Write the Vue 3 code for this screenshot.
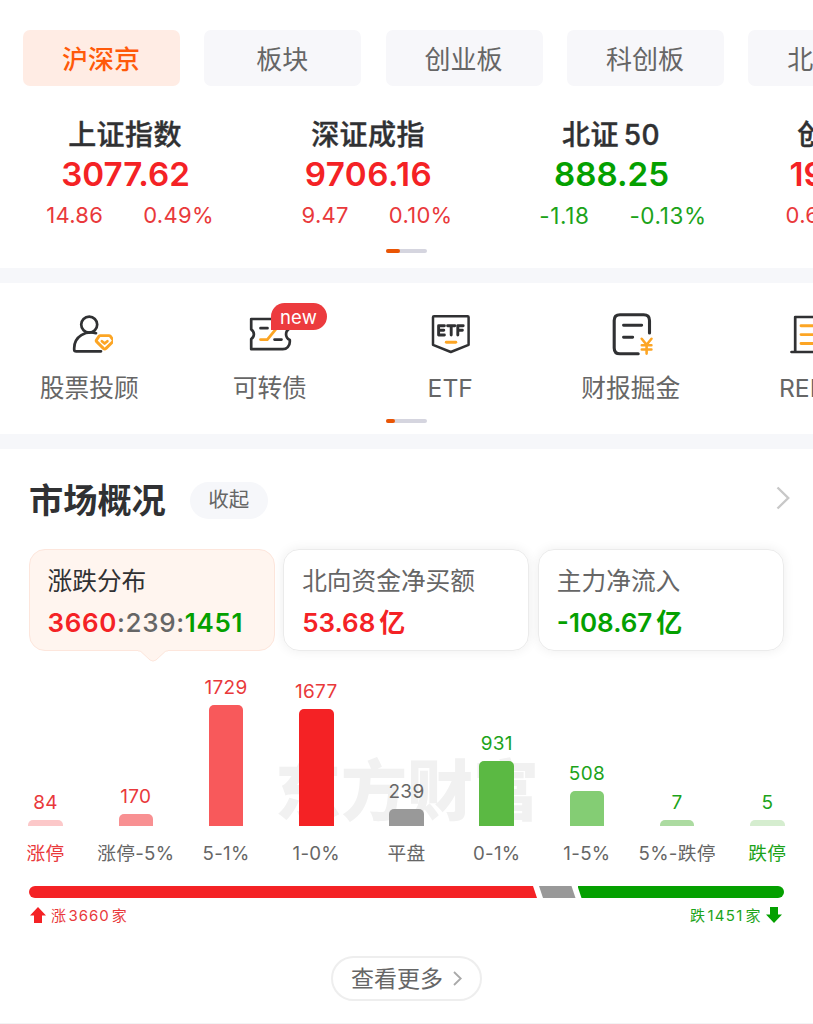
<template>
  <div class="page">
    <section class="quotes">
      <div class="tabs">
        <div v-for="(tab, i) in tabs" :key="tab" class="tab" :class="{ active: i === 0 }">{{ tab }}</div>
      </div>
      <div class="indexes">
        <div v-for="item in indexes" :key="item.name" class="index" :class="item.trend">
          <div class="index-name">{{ item.name }}<span v-if="item.num" class="index-num">{{ item.num }}</span></div>
          <div class="index-price">{{ item.price }}</div>
          <div class="index-change">
            <span>{{ item.change }}</span>
            <span>{{ item.percent }}</span>
          </div>
        </div>
      </div>
      <div class="pager"><i class="wide"></i></div>
    </section>

    <section class="shortcuts">
      <div class="shortcut-row">
        <div class="shortcut">
          <svg class="icon" viewBox="0 0 48 48" fill="none" stroke-linecap="round" stroke-linejoin="round">
            <g stroke="#303133" stroke-width="2.7">
              <circle cx="24.2" cy="14.6" r="8" />
              <path d="M31 23.2C21 20.5 9.2 26 9.2 38.2v1.2q0 1.9 2 1.9H36" />
            </g>
            <g stroke="#fca524">
              <path d="M35.2 25.600h8.800q.8 0 1.300.6l2.900 3.900q.5.800-.2 1.500l-7 6.800q-1.300 1.200-2.600 0l-6.800-6.800q-.7-.7-.2-1.500l2.700-3.900q.4-.6 1.100-.6z" stroke-width="2.9" />
              <path d="M36.900 31.200l2.700 2.300 2.800-2.300" stroke-width="2.700" />
            </g>
          </svg>
          <div class="shortcut-label">股票投顾</div>
        </div>
        <div class="shortcut">
          <svg class="icon" viewBox="0 0 48 48" fill="none" stroke-linecap="round" stroke-linejoin="round">
            <g stroke="#303133" stroke-width="2.7">
              <path d="M5.2 9h38.600v9.500c-5 2.500-5 9 0 11.500v2c0 4-3 7.200-7 7.200H5.200V29c3.600-2.600 3.600-7 0-9.600z" />
              <path d="M14.500 18.200h7M28.500 29.600h7" stroke-width="2.700" />
            </g>
            <path d="M14.500 29.600h6.800l9.400-11.400h6" stroke="#fca524" stroke-width="2.8" />
          </svg>
          <span class="badge">new</span>
          <div class="shortcut-label">可转债</div>
        </div>
        <div class="shortcut">
          <svg class="icon" viewBox="0 0 48 48" fill="none" stroke-linecap="round" stroke-linejoin="round">
            <path d="M8 6.200h33.600q1 0 1 1v27.600L24.800 42 7 34.800V7.200q0-1 1-1z" stroke="#303133" stroke-width="2.5" />
            <path d="M18.400 15.800h-5.800v9.200h5.800M12.600 20.300h5.200M21.600 15.800h7.200M25.200 15.800V25M37.200 15.800h-5.400V25M31.800 20.300h4.600" stroke="#303133" stroke-width="2.900" />
            <path d="M20.300 32.300h9.500" stroke="#fca524" stroke-width="2.900" />
          </svg>
          <div class="shortcut-label">ETF</div>
        </div>
        <div class="shortcut">
          <svg class="icon" viewBox="0 0 48 48" fill="none" stroke-linecap="round" stroke-linejoin="round">
            <g stroke="#303133" stroke-width="3.1">
              <path d="M42.500 23V10.500q0-5.800-5.800-5.800H13q-5.800 0-5.800 5.800V38q0 5.800 5.800 5.800h18.200" />
              <path d="M16.500 15.200h18.200M16.500 27.300h9.200" stroke-width="2.900" />
            </g>
            <path d="M34.700 28.800l4.900 6 4.900-6M34.800 35.300h9.600M34.800 39.500h9.600M39.600 34.800v8.800" stroke="#fca524" stroke-width="2.600" />
          </svg>
          <div class="shortcut-label">财报掘金</div>
        </div>
        <div class="shortcut">
          <svg class="icon" viewBox="0 0 48 48" fill="none" stroke-linecap="round" stroke-linejoin="round">
            <path d="M4.500 42h40M8.200 42V7h24v35" stroke="#303133" stroke-width="2.7" />
            <path d="M14 15.700h12M14 24.600h12M14 33.500h12" stroke="#fca524" stroke-width="2.9" />
          </svg>
          <div class="shortcut-label">REITs</div>
        </div>
      </div>
      <div class="pager"><i></i></div>
    </section>

    <section class="market">
      <div class="market-head">
        <h2>市场概况</h2>
        <span class="fold">收起</span>
        <svg class="head-arrow" viewBox="0 0 14 24" fill="none" stroke="#c8c8c8" stroke-width="2.4">
          <path d="M1.500 1.500L12.200 12 1.500 22.500" />
        </svg>
      </div>

      <div class="cards">
        <div class="card selected">
          <div class="card-title">涨跌分布</div>
          <div class="card-value"><span class="up">3660</span><span class="flat">:239:</span><span class="down">1451</span></div>
          <svg class="pointer" viewBox="0 0 30 12">
            <path d="M0 0h30v1.200c-2 0-3 .8-4 1.800l-8 7q-3 2.400-6 0L4 3C3 2 2 1.200 0 1.200z" fill="#fff5ef" />
            <path d="M0 .8c2 0 3 .8 4 1.800l8 7.400q3 2.200 6 0l8-7.400c1-1 2-1.800 4-1.800" fill="none" stroke="#fde6dc" />
          </svg>
        </div>
        <div class="card">
          <div class="card-title">北向资金净买额</div>
          <div class="card-value up">53.68<span class="unit">亿</span></div>
        </div>
        <div class="card">
          <div class="card-title">主力净流入</div>
          <div class="card-value down">-108.67<span class="unit">亿</span></div>
        </div>
      </div>

      <div class="chart">
        <div class="watermark">东方财富</div>
        <div v-for="bar in bars" :key="bar.label" class="column" :class="bar.trend">
          <span class="count">{{ bar.count }}</span>
          <div class="bar" :style="{ height: bar.height + 'px', background: bar.color }"></div>
          <span class="range" :class="{ limit: bar.limit }">{{ bar.label }}</span>
        </div>
      </div>

      <div class="ratio">
        <div class="ratio-up"></div>
        <div class="ratio-flat"></div>
        <div class="ratio-down"></div>
      </div>
      <div class="totals">
        <div class="total up">
          <svg viewBox="0 0 16 16"><path d="M8 0l8 8.400h-4V16H4V8.400H0z" fill="#f42225" /></svg>
          <span>涨<b>3660</b>家</span>
        </div>
        <div class="total down">
          <span>跌<b>1451</b>家</span>
          <svg viewBox="0 0 16 16"><path d="M8 16l8-8.400h-4V0H4v7.600H0z" fill="#04a000" /></svg>
        </div>
      </div>

      <div class="more">
        <span>查看更多</span>
        <svg viewBox="0 0 9 15" fill="none" stroke="#a9a9a9" stroke-width="1.8">
          <path d="M1 1l6.700 6.500L1 14" />
        </svg>
      </div>
    </section>
  </div>
</template>

<script setup>
const tabs = ['沪深京', '板块', '创业板', '科创板', '北证板'];

const indexes = [
  { name: '上证指数', price: '3077.62', change: '14.86', percent: '0.49%', trend: 'up' },
  { name: '深证成指', price: '9706.16', change: '9.47', percent: '0.10%', trend: 'up' },
  { name: '北证', num: '50', price: '888.25', change: '-1.18', percent: '-0.13%', trend: 'down' },
  { name: '创业板指', price: '1902.63', change: '0.68', percent: '0.04%', trend: 'up' },
];

const bars = [
  { label: '涨停', count: 84, height: 6, color: '#fcc8c9', trend: 'up', limit: true },
  { label: '涨停-5%', count: 170, height: 12, color: '#f89092', trend: 'up' },
  { label: '5-1%', count: 1729, height: 121, color: '#f8595b', trend: 'up' },
  { label: '1-0%', count: 1677, height: 117, color: '#f42225', trend: 'up' },
  { label: '平盘', count: 239, height: 17, color: '#999999', trend: 'flat' },
  { label: '0-1%', count: 931, height: 65, color: '#5bb943', trend: 'down' },
  { label: '1-5%', count: 508, height: 35.5, color: '#84cd74', trend: 'down' },
  { label: '5%-跌停', count: 7, height: 6, color: '#acdba1', trend: 'down' },
  { label: '跌停', count: 5, height: 6, color: '#d5edcf', trend: 'down', limit: true },
];
</script>

<style>
body {
  margin: 0;
  background: #fff;
}
</style>

<style scoped>
.page {
  width: 813px;
  height: 1024px;
  overflow: hidden;
  box-sizing: border-box;
  border-bottom: 1px solid #f3f3f4;
  background: #fff;
  color: #303133;
  font-family: Inter, "Noto Sans CJK SC", sans-serif;
}

.up {
  color: #f42225;
}

.down {
  color: #04a000;
}

.flat {
  color: #666;
}

/* quotes */
.quotes {
  height: 268px;
  padding-top: 30px;
  box-sizing: border-box;
  overflow: hidden;
}

.tabs {
  display: flex;
  gap: 24.3px;
  padding-left: 23px;
}

.tab {
  flex: 0 0 157px;
  height: 56px;
  line-height: 59px;
  border-radius: 7px;
  background: #f7f7fa;
  color: #666;
  font-size: 26px;
  text-align: center;
  text-indent: -1px;
}

.tab.active {
  background: #ffece4;
  color: #ff5a0a;
  font-weight: 500;
}

.indexes {
  display: flex;
  padding-left: 4px;
  margin-top: 28px;
}

.index {
  flex: 0 0 243px;
  text-align: center;
}

.index-name {
  height: 40px;
  line-height: 42px;
  color: #303133;
  font-size: 28px;
  font-weight: 500;
  letter-spacing: 0.4px;
  text-indent: -1px;
  -webkit-text-stroke: 0.4px #303133;
}

.index-num {
  margin-left: 5px;
  font-weight: 500;
}

.index-price {
  height: 40px;
  line-height: 40px;
  font-size: 33.200px;
  font-weight: 600;
}

.index:nth-child(2) .index-price {
  letter-spacing: 0.5px;
}

.index-change {
  display: flex;
  justify-content: center;
  gap: 40px;
  height: 43px;
  line-height: 43px;
  padding-left: 9px;
  color: #e9393b;
  font-size: 22px;
  letter-spacing: 0.3px;
  white-space: nowrap;
}

.index.down .index-change {
  color: #1ca31a;
  font-size: 22.500px;
  letter-spacing: 0.6px;
}

.index:nth-child(2) .index-change {
  padding-left: 17px;
}

.index:nth-child(3) .index-change {
  padding-left: 23px;
}

.index:nth-child(4) .index-change {
  padding-left: 20px;
}

.pager {
  width: 41px;
  height: 4px;
  margin: 12px 0 0 386px;
  border-radius: 2px;
  background: #d5d5df;
}

.pager i {
  display: block;
  width: 9px;
  height: 4px;
  border-radius: 2px;
  background: #ea5504;
}

.pager .wide {
  width: 14px;
}

/* shortcuts */
.shortcuts {
  height: 151px;
  border-top: 15px solid #f6f7fa;
  border-bottom: 15px solid #f6f7fa;
  overflow: hidden;
}

.shortcut-row {
  display: flex;
  padding-top: 27px;
  margin-left: -1px;
}

.shortcut {
  position: relative;
  flex: 0 0 180.500px;
  display: flex;
  flex-direction: column;
  align-items: center;
}

.icon {
  display: block;
  width: 48px;
  height: 48px;
}

.shortcut-label {
  height: 36px;
  line-height: 37px;
  margin-top: 12px;
  color: #666;
  font-size: 24.700px;
}

.badge {
  position: absolute;
  left: 91px;
  top: -7px;
  width: 56px;
  height: 27px;
  line-height: 28px;
  border-radius: 14px 14px 14px 0;
  background: #ec3b3e;
  color: #fff;
  font-size: 18.500px;
  letter-spacing: 0.2px;
  text-align: center;
}

.shortcuts .pager {
  margin-top: 13px;
}

/* market overview */
.market {
  padding-top: 33px;
}

.market-head {
  display: flex;
  align-items: center;
  height: 38px;
  padding: 0 23px 0 29px;
}

.market-head h2 {
  margin: 0;
  font-size: 34.200px;
  line-height: 40px;
  font-weight: 700;
}

.fold {
  width: 78px;
  height: 37px;
  line-height: 36px;
  margin: -2px 0 0 24px;
  border-radius: 19px;
  background: #f6f7fa;
  color: #666;
  font-size: 20.500px;
  text-align: center;
}

.head-arrow {
  width: 14px;
  height: 24px;
  margin: -6px 0 0 auto;
}

.cards {
  display: flex;
  gap: 8.500px;
  padding: 0 29px 0 28.500px;
  margin-top: 29px;
}

.card {
  position: relative;
  flex: 1;
  height: 102px;
  box-sizing: border-box;
  padding: 12px 0 0 18px;
  border: 1px solid #ebebeb;
  border-radius: 16px;
  box-shadow: 0 0 12px rgba(0, 0, 0, 0.07);
}

.card.selected {
  background: #fff5ef;
  border-color: #fde6dc;
  box-shadow: none;
}

.card-title {
  height: 38px;
  line-height: 39px;
  color: #666;
  font-size: 24.700px;
}

.selected .card-title {
  color: #303133;
}

.card-value {
  height: 43px;
  line-height: 45px;
  font-size: 26px;
  font-weight: 600;
  white-space: nowrap;
}

.selected .card-value {
  letter-spacing: 0.65px;
}

.card-value .flat {
  font-weight: 500;
}

.unit {
  margin-left: 4px;
}

.pointer {
  position: absolute;
  left: 108px;
  top: 100px;
  width: 30px;
  height: 12px;
}

.chart {
  position: relative;
  display: flex;
  align-items: flex-end;
  height: 217px;
  width: 812px;
}

.watermark {
  position: absolute;
  left: 275px;
  top: 92px;
  line-height: 96px;
  color: #f1f1f1;
  font-size: 66px;
  font-weight: 900;
}

.column {
  position: relative;
  left: 0.5px;
  flex: 1;
  display: flex;
  flex-direction: column;
  align-items: center;
  font-size: 19px;
}

.column.up {
  color: #e9393b;
}

.column.down {
  color: #1ca31a;
}

.count {
  height: 30px;
  line-height: 26px;
  letter-spacing: 0.3px;
}

.bar {
  width: 34.500px;
  border-radius: 5px 5px 0 0;
}

.range {
  height: 30px;
  line-height: 31px;
  margin-top: 12px;
  color: #666;
  font-size: 18.700px;
  letter-spacing: 0.3px;
  white-space: nowrap;
}

.range.limit {
  color: inherit;
}

.ratio {
  display: flex;
  height: 12px;
  margin: 18px 29px 0 28.500px;
  border-radius: 6px;
  overflow: hidden;
}

.ratio-up {
  width: 508.500px;
  background: #f42225;
  clip-path: polygon(0 0, calc(100% - 4px) 0, 100% 100%, 0 100%);
}

.ratio-flat {
  width: 36.500px;
  margin-left: 2px;
  margin-right: 2px;
  background: #999;
  clip-path: polygon(0 0, calc(100% - 4px) 0, 100% 100%, 4px 100%);
}

.ratio-down {
  flex: 1;
  background: #04a000;
  clip-path: polygon(0 0, 100% 0, 100% 100%, 4px 100%);
}

.totals {
  display: flex;
  justify-content: space-between;
  height: 34px;
  padding: 0 31px 0 30px;
}

.total {
  display: flex;
  align-items: center;
  gap: 5px;
  font-size: 15px;
  letter-spacing: 0.4px;
}

.total.up {
  color: #e9393b;
}

.total.down {
  color: #1ca31a;
}

.total span {
  margin-top: -2px;
}

.total svg {
  width: 16px;
  height: 16px;
}

.total b {
  margin: 0 2px;
  font-weight: 400;
  letter-spacing: 1px;
}

.total.down b {
  letter-spacing: 1.300px;
}

.more {
  display: flex;
  align-items: center;
  justify-content: center;
  gap: 10px;
  width: 151px;
  height: 45px;
  box-sizing: border-box;
  margin: 24px 0 0 331px;
  border: 2px solid #eee;
  border-radius: 23px;
  color: #666;
  font-size: 23px;
}

.more span {
  margin-top: -3px;
}

.more svg {
  width: 9px;
  height: 15px;
}
</style>
